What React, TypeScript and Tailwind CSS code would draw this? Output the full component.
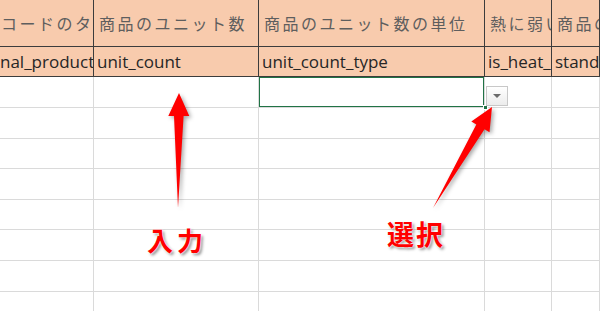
import type { ReactNode } from 'react';

const columns = [94, 165, 226, 67, 48];
const bodyRows = [31, 31, 30, 31, 30, 31, 31, 31];

const titleRow = ['コードのタイプ', '商品のユニット数', '商品のユニット数の単位', '熱に弱い商品', '商品の規格'];
const keyRow = ['nal_product', 'unit_count', 'unit_count_type', 'is_heat_sensitive', 'standard_price'];

function arrowPoints(tx: number, ty: number, bx: number, by: number) {
    const len = Math.hypot(tx - bx, ty - by);
    const ux = (tx - bx) / len;
    const uy = (ty - by) / len;
    const nx = -uy;
    const ny = ux;
    const headLen = 23;
    const headHalf = 10.5;
    const shaftHalf = 4.8;
    const cx = tx - ux * headLen;
    const cy = ty - uy * headLen;
    const pts = [
        [tx, ty],
        [cx + nx * headHalf, cy + ny * headHalf],
        [cx + nx * shaftHalf, cy + ny * shaftHalf],
        [bx, by],
        [cx - nx * shaftHalf, cy - ny * shaftHalf],
        [cx - nx * headHalf, cy - ny * headHalf],
    ];
    return pts.map(([x, y]) => `${x.toFixed(1)},${y.toFixed(1)}`).join(' ');
}

function Cell({ children, className }: { children?: ReactNode; className: string }) {
    return <div className={`overflow-hidden whitespace-nowrap ${className}`}>{children}</div>;
}

export default function App() {
    const grid = { gridTemplateColumns: columns.map((c) => `${c}px`).join(' ') };

    return (
        <div className="relative h-[311px] w-[600px] overflow-hidden bg-white font-['Noto_Sans_CJK_JP',sans-serif]">
            {/* header rows */}
            <div className="grid" style={grid}>
                {titleRow.map((t, i) => (
                    <Cell
                        key={t}
                        className="flex h-[47px] items-center border-r border-b border-[#3c3c3c] bg-[#f8cbad] pl-[5px] text-[16px] tracking-[2.5px] text-[#5e5e5e]"
                    >
                        {i === 0 ? <span className="-ml-[4px]">コードのタ</span> : t}
                    </Cell>
                ))}
                {keyRow.map((t) => (
                    <Cell
                        key={t}
                        className="flex h-[30px] items-center border-r border-b border-[#3c3c3c] bg-[#f8cbad] pl-[3px] font-['Open_Sans',sans-serif] text-[17px] text-[#262626]"
                    >
                        {t === 'nal_product' ? <span className="-ml-[3px]">{t}</span> : t}
                    </Cell>
                ))}
            </div>

            {/* body grid */}
            {bodyRows.map((h, r) => (
                <div key={r} className="grid" style={grid}>
                    {columns.map((_, c) => (
                        <Cell
                            key={c}
                            className={`border-r border-b border-[#dadada] ${h === 31 ? 'h-[31px]' : 'h-[30px]'} ${
                                r === 0 && c === 2 ? 'relative' : ''
                            }`}
                        >
                            {r === 0 && c === 2 && (
                                <div className="absolute -top-px -left-px h-[32px] w-[227px] border-2 border-[#217346]" />
                            )}
                        </Cell>
                    ))}
                </div>
            ))}

            {/* fill handle */}
            <div className="absolute top-[105px] left-[483px] h-[5px] w-[5px] border border-white bg-[#217346]" />

            {/* dropdown button */}
            <div className="absolute top-[86px] left-[486px] flex h-[20px] w-[22px] items-center justify-center border border-[#c8c8c8] bg-gradient-to-b from-white to-[#ececec]">
                <div className="h-0 w-0 border-x-[4px] border-t-[4px] border-x-transparent border-t-[#6b6b6b]" />
            </div>

            {/* annotation arrows */}
            <svg
                className="absolute inset-0 [filter:drop-shadow(2px_2px_2px_rgba(0,0,0,0.35))]"
                width="600"
                height="311"
            >
                <polygon points={arrowPoints(179, 93, 178, 208)} fill="#ff0000" />
                <polygon points={arrowPoints(492, 107, 433, 208)} fill="#ff0000" />
            </svg>

            <div className="absolute top-[227px] left-[147px] text-[26px] leading-none font-bold tracking-[4px] text-[#ff0000] [text-shadow:0_0_2px_#fff,0_0_2px_#fff,2px_2px_3px_rgba(0,0,0,0.45)]">
                入力
            </div>
            <div className="absolute top-[220px] left-[387px] text-[27px] leading-none font-bold tracking-[2px] text-[#ff0000] [text-shadow:0_0_2px_#fff,0_0_2px_#fff,2px_2px_3px_rgba(0,0,0,0.45)]">
                選択
            </div>
        </div>
    );
}
